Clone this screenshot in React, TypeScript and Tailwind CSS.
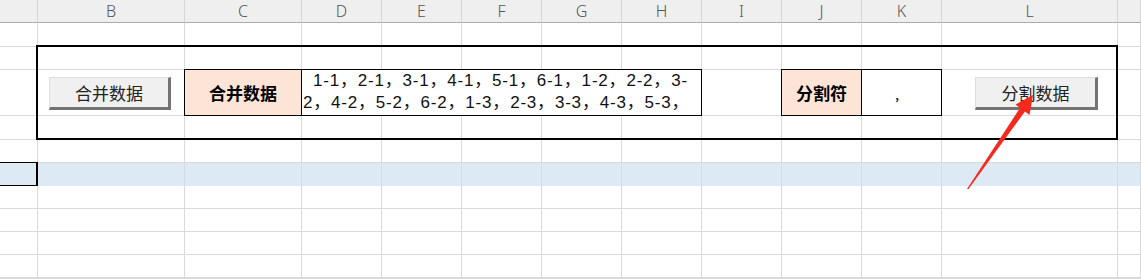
const cols = ['', 'B', 'C', 'D', 'E', 'F', 'G', 'H', 'I', 'J', 'K', 'L', ''];
const bodyRows = 11;
const activeRow = 5;

const Cell = ({ blue }: { blue: boolean }) => (
  <div className={blue ? 'border-r border-b border-r-[#d3dce6] border-b-[#dde9f5] bg-[#dde9f5]' : 'border-r border-b border-[#dadada] bg-white'} />
);

const Button = ({ label, className }: { label: string; className: string }) => (
  <div
    className={
      'flex items-center justify-center self-start h-[33px] bg-[#f0f0f0] border-t border-l border-t-[#dedede] border-l-[#dedede] border-r-[3px] border-b-[3px] border-r-[#737373] border-b-[#737373] text-[17px] text-[#222] ' +
      className
    }
  >
    {label}
  </div>
);

export default function App() {
  return (
    <div className="relative h-[279px] w-[1141px] overflow-hidden bg-white font-['Noto_Sans_CJK_SC',sans-serif]">
      <div className="grid h-full grid-cols-[38px_147px_117px_80px_80px_80px_80px_80px_80px_80px_80px_176px_1fr] grid-rows-[23px_24px_23px_46px_24px_23px_23px_23px_23px_23px_23px_1fr]">
        {/* sheet background: headers + gridlines */}
        <div className="col-span-full row-span-full grid grid-cols-subgrid grid-rows-subgrid">
          {cols.map((c, i) => (
            <div
              key={'h' + i}
              className="flex items-center justify-center border-r border-b border-r-[#d6d6d6] border-b-[#ababab] bg-[#efefef] font-['Noto_Sans'] text-[16px] font-light text-[#555]"
            >
              {c}
            </div>
          ))}
          {Array.from({ length: bodyRows }).map((_, r) =>
            cols.map((_, i) => <Cell key={r + '-' + i} blue={r === activeRow} />)
          )}
        </div>

        {/* active cell */}
        <div className="col-start-1 row-start-7 -mt-px border-y border-r-2 border-black bg-[#dde9f5]" />

        {/* outer thick frame */}
        <div className="col-start-2 col-end-13 row-start-3 row-end-6 -ml-[2px] -mt-[2px] border-2 border-black" />

        <Button label="合并数据" className="col-start-2 row-start-4 ml-[11px] mt-[7px] w-[122px]" />

        <div className="col-start-3 row-start-4 -ml-px -mt-px flex items-center justify-center border border-black bg-[#fce4d6] text-[17px] font-bold text-black">
          合并数据
        </div>

        <div className="col-start-4 col-end-9 row-start-4 -ml-px -mt-px overflow-hidden border border-black bg-white pl-px font-['Liberation_Sans','Noto_Sans_CJK_SC',sans-serif] text-[17px] leading-[22px] tracking-[0.8px] whitespace-nowrap text-[#111]">
          <div className="pl-[10px]">1-1，2-1，3-1，4-1，5-1，6-1，1-2，2-2，3-</div>
          <div>2，4-2，5-2，6-2，1-3，2-3，3-3，4-3，5-3，</div>
        </div>

        <div className="col-start-10 row-start-4 -ml-px -mt-px flex items-center justify-center border border-black bg-[#fce4d6] text-[17px] font-bold text-black">
          分割符
        </div>

        <div className="col-start-11 row-start-4 -ml-px -mt-px flex items-center justify-center border border-black bg-white pt-[4px] pr-[2px] text-[13px] text-black">
          ，
        </div>

        <Button label="分割数据" className="col-start-12 row-start-4 ml-[33px] mt-[7px] w-[123px]" />
      </div>

      {/* red annotation arrow */}
      <svg className="pointer-events-none absolute left-0 top-0" width="1141" height="279" viewBox="0 0 1141 279">
        <polygon
          points="967,189 1020,108 1015.5,104.5 1033,95 1029.5,115 1025,111.5 968.5,189"
          fill="#f52a1c"
        />
      </svg>
    </div>
  );
}
